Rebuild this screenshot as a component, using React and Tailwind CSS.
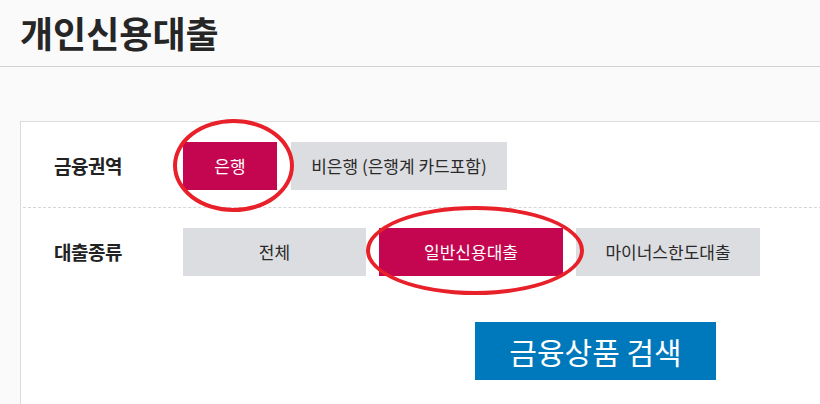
import React from 'react';

const font = { fontFamily: '"Noto Sans CJK KR", "Noto Sans", sans-serif' };

const Chip = ({ active, className = '', children }) => (
  <button
    className={
      'h-12 flex items-center justify-center text-[17px] ' +
      (active ? 'bg-[#c4054f] text-white ' : 'bg-[#dcdde0] text-[#2a2a2a] ') +
      className
    }
  >
    {children}
  </button>
);

const App = () => {
  return (
    <div className="w-[820px] h-[404px] overflow-hidden bg-[#fafafa]" style={font}>
      <header className="h-[67px] border-b border-[#d2d2d2] pl-[20px] pt-[8px]">
        <h1 className="text-[36px] font-bold leading-[48px] text-[#262626]">개인신용대출</h1>
      </header>

      <div className="relative mt-[54px] ml-5 -mr-10 h-[400px] border border-[#dcdcdc] bg-white">
        <div className="flex items-center pl-[33px] pt-5 pb-[17px]">
          <span className="w-[129px] text-[19px] font-bold text-[#222] tracking-[-0.5px]">금융권역</span>
          <div className="flex gap-[14px]">
            <Chip active className="w-[94px]">은행</Chip>
            <Chip className="w-[216px]">비은행 (은행계 카드포함)</Chip>
          </div>
        </div>

        <div className="mx-[2px] border-t border-dashed border-[#d6d6d6]" />

        <div className="flex items-center pl-[33px] pt-5">
          <span className="w-[129px] text-[19px] font-bold text-[#222] tracking-[-0.5px]">대출종류</span>
          <div className="flex gap-[13px]">
            <Chip className="w-[183px]">전체</Chip>
            <Chip active className="w-[184px]">일반신용대출</Chip>
            <Chip className="w-[184px]">마이너스한도대출</Chip>
          </div>
        </div>

        <div className="mt-[46px] ml-[454px]">
          <button className="w-[241px] h-[58px] bg-[#0079bc] text-white text-[30px] leading-none">
            금융상품 검색
          </button>
        </div>

        {/* red annotation circles */}
        <div className="absolute left-[152px] top-[-3px] w-[121px] h-[93px] rounded-[50%] border-4 border-[#e8202a]" />
        <div className="absolute left-[345px] top-[84px] w-[218px] h-[89px] rounded-[50%] border-4 border-[#e8202a]" />
      </div>
    </div>
  );
};

export default App;
